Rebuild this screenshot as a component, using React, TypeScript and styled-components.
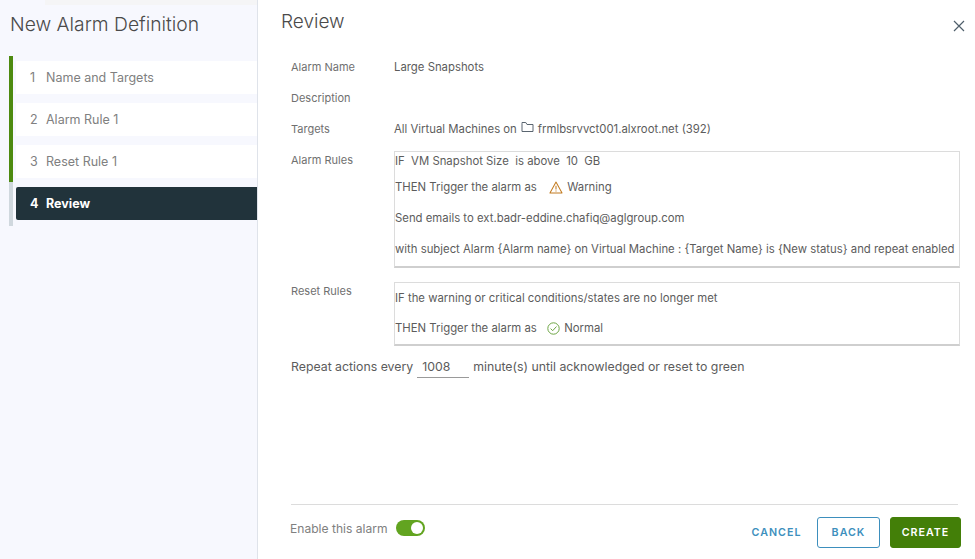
import React from 'react';
import styled, { createGlobalStyle } from 'styled-components';

const GlobalStyle = createGlobalStyle`
    html, body {
        margin: 0;
        padding: 0;
        background: #fff;
    }

    body {
        font-family: Inter, "Noto Sans", sans-serif;
        color: #565656;
    }
`;

const Page = styled.div`
    display: flex;
    width: 975px;
    height: 559px;
    overflow: hidden;
`;

const Sidebar = styled.aside`
    position: relative;
    flex: 0 0 258px;
    box-sizing: border-box;
    padding: 13px 0 0 9px;
    background: #f7f8fe;
    border-right: 1px solid #dfe3ea;

    &::before {
        content: '';
        position: absolute;
        top: 0;
        left: 45px;
        right: 0;
        height: 5px;
        background: #f5f5f6;
    }
`;

const Title = styled.h2`
    margin: 0 0 21px 1px;
    font-size: 19.3px;
    line-height: 22px;
    font-weight: 300;
    color: #4a4a4a;
`;

const StepList = styled.ol`
    margin: 0;
    padding: 0;
    list-style: none;
`;

const Step = styled.li<{ $state: 'done' | 'current' }>`
    border-left: 4px solid ${({ $state }) => ($state === 'done' ? '#4d8a10' : '#d0d8de')};
    padding: ${({ $state }) => ($state === 'done' ? '5px 0 4px 3px' : '5px 0 6px 3px')};
`;

const StepBox = styled.div<{ $active?: boolean }>`
    display: flex;
    align-items: center;
    height: 33px;
    padding-left: 14px;
    font-size: 12.5px;
    font-weight: ${({ $active }) => ($active ? 700 : 400)};
    color: ${({ $active }) => ($active ? '#fff' : '#808080')};
    background: ${({ $active }) => ($active ? '#21333b' : '#fff')};
    border-radius: ${({ $active }) => ($active ? '2px 0 0 2px' : '0')};
`;

const StepNumber = styled.span`
    width: 16px;
`;

const Main = styled.main`
    flex: 1;
    display: flex;
    flex-direction: column;
    box-sizing: border-box;
    padding: 11px 14px 11px 23px;
    min-width: 0;
`;

const Header = styled.header`
    display: flex;
    justify-content: space-between;
    align-items: flex-start;
    height: 48px;
`;

const Heading = styled.h3`
    margin: 0;
    font-size: 19px;
    line-height: 22px;
    font-weight: 300;
    color: #4a4a4a;
`;

const CloseButton = styled.button`
    display: flex;
    margin: 9px -4px 0 0;
    padding: 0;
    border: 0;
    background: none;
`;

const Details = styled.div`
    display: grid;
    grid-template-columns: 103px 1fr;
    margin: 0 1px 0 10px;
    font-size: 11.35px;
    line-height: 16px;
`;

const RowLabel = styled.div<{ $rowHeight?: number }>`
    color: #707070;
    font-size: 11px;
    height: ${({ $rowHeight }) => $rowHeight ?? 31}px;
`;

const RowValue = styled.div`
    color: #5c5c5c;
    display: flex;
    align-items: flex-start;
    gap: 4px;
`;

const RuleBox = styled.div<{ $height: number }>`
    box-sizing: border-box;
    height: ${({ $height }) => $height}px;
    margin: -1px 0 0 0;
    padding-top: 1px;
    border: 1px solid #dcdcdc;
    border-bottom-width: 2px;
    border-bottom-color: #cfcfcf;
    background: #fff;
    color: #5c5c5c;
    white-space: nowrap;
    overflow: hidden;
`;

const RuleLine = styled.div<{ $gap?: number }>`
    display: flex;
    align-items: center;
    height: 16px;
    margin-top: ${({ $gap }) => $gap ?? 0}px;
    white-space: pre;
`;

const RuleIcon = styled.svg<{ $before: number }>`
    flex: none;
    margin: 0 1px 0 ${({ $before }) => $before}px;
`;

const RepeatRow = styled.div`
    display: flex;
    align-items: flex-start;
    margin: 13px 0 0 10px;
    font-size: 12.3px;
    line-height: 16px;
    color: #5c5c5c;
`;

const RepeatInput = styled.div`
    box-sizing: border-box;
    width: 52px;
    height: 19px;
    margin: 0 4px 0 4px;
    padding-left: 5px;
    border-bottom: 1px solid #9a9a9a;
`;

const Spacer = styled.div`
    flex: 1;
`;

const Footer = styled.footer`
    display: flex;
    align-items: flex-start;
    margin: 0 3px 0 10px;
    padding-top: 12px;
    border-top: 1px solid #dcdcdc;
`;

const EnableGroup = styled.div`
    display: flex;
    align-items: center;
    height: 20px;
    margin-left: -1px;
    margin-top: 1px;
`;

const EnableLabel = styled.span`
    font-size: 12.1px;
    color: #808080;
    margin-right: 8px;
`;

const Toggle = styled.div`
    position: relative;
    width: 29px;
    height: 16px;
    border-radius: 8px;
    background: #62a420;

    &::after {
        content: '';
        position: absolute;
        top: 2px;
        right: 2px;
        width: 12px;
        height: 12px;
        border-radius: 50%;
        background: #fff;
    }
`;

const Actions = styled.div`
    display: flex;
    align-items: center;
    margin-left: auto;
    margin-right: -3px;
    gap: 10px;
`;

const Button = styled.button<{ $variant: 'link' | 'outline' | 'solid' }>`
    box-sizing: border-box;
    height: 31px;
    padding: 0;
    width: ${({ $variant }) => ($variant === 'link' ? '61px' : $variant === 'outline' ? '63px' : '71px')};
    font-family: inherit;
    font-size: 10.7px;
    font-weight: 600;
    letter-spacing: 1px;
    border-radius: 3px;
    color: ${({ $variant }) => ($variant === 'solid' ? '#fff' : '#3d8fbd')};
    background: ${({ $variant }) => ($variant === 'solid' ? '#437f08' : '#fff')};
    border: ${({ $variant }) =>
        $variant === 'link'
            ? '0'
            : $variant === 'outline'
              ? '1px solid #3d8fbd'
              : '1px solid #437f08'};
`;

const FolderIcon = () => (
    <svg width="13" height="12" viewBox="0 0 13 12" fill="none" stroke="#5a6570" strokeWidth="1">
        <path d="M1 2.5V10.5H12V3.5H6L4.8 1.5H1V2.5Z" />
    </svg>
);

const WarningIcon = () => (
    <RuleIcon $before={9} width="14" height="13" viewBox="0 0 15 14" fill="none">
        <path d="M7.5 1.2L14 12.8H1L7.5 1.2Z" stroke="#c27b20" strokeWidth="1.1" strokeLinejoin="round" />
        <path d="M7.5 5V9.2M7.5 10.2V11.3" stroke="#c27b20" strokeWidth="1.1" />
    </RuleIcon>
);

const NormalIcon = () => (
    <RuleIcon $before={7} width="13" height="13" viewBox="0 0 13 13" fill="none">
        <circle cx="6.5" cy="6.5" r="5.7" stroke="#6da544" strokeWidth="1" />
        <path d="M3.6 6.6L5.7 8.7L9.5 4.5" stroke="#6da544" strokeWidth="1" />
    </RuleIcon>
);

const steps = ['Name and Targets', 'Alarm Rule 1', 'Reset Rule 1'];

const App: React.FC = () => (
    <Page>
        <GlobalStyle />
        <Sidebar>
            <Title>New Alarm Definition</Title>
            <StepList>
                {steps.map((name, i) => (
                    <Step key={name} $state="done">
                        <StepBox>
                            <StepNumber>{i + 1}</StepNumber>
                            {name}
                        </StepBox>
                    </Step>
                ))}
                <Step $state="current">
                    <StepBox $active>
                        <StepNumber>4</StepNumber>
                        Review
                    </StepBox>
                </Step>
            </StepList>
        </Sidebar>
        <Main>
            <Header>
                <Heading>Review</Heading>
                <CloseButton aria-label="Close">
                    <svg width="12" height="12" viewBox="0 0 12 12" stroke="#4f5f6b" strokeWidth="1.2">
                        <path d="M1 1L11 11M11 1L1 11" />
                    </svg>
                </CloseButton>
            </Header>
            <Details>
                <RowLabel>Alarm Name</RowLabel>
                <RowValue>Large Snapshots</RowValue>
                <RowLabel>Description</RowLabel>
                <RowValue />
                <RowLabel>Targets</RowLabel>
                <RowValue>
                    All Virtual Machines on <FolderIcon /> frmlbsrvvct001.alxroot.net (392)
                </RowValue>
                <RowLabel $rowHeight={131}>Alarm Rules</RowLabel>
                <RuleBox $height={117}>
                    <RuleLine>IF  VM Snapshot Size  is above  10  GB</RuleLine>
                    <RuleLine $gap={10}>
                        THEN Trigger the alarm as <WarningIcon /> Warning
                    </RuleLine>
                    <RuleLine $gap={15}>Send emails to ext.badr-eddine.chafiq@aglgroup.com</RuleLine>
                    <RuleLine $gap={15}>
                        with subject Alarm {'{Alarm name}'} on Virtual Machine : {'{Target Name}'} is {'{New status}'} and repeat enabled
                    </RuleLine>
                </RuleBox>
                <RowLabel $rowHeight={63}>Reset Rules</RowLabel>
                <RuleBox $height={64}>
                    <RuleLine $gap={6}>IF the warning or critical conditions/states are no longer met</RuleLine>
                    <RuleLine $gap={14}>
                        THEN Trigger the alarm as <NormalIcon /> Normal
                    </RuleLine>
                </RuleBox>
            </Details>
            <RepeatRow>
                Repeat actions every
                <RepeatInput>1008</RepeatInput>
                minute(s) until acknowledged or reset to green
            </RepeatRow>
            <Spacer />
            <Footer>
                <EnableGroup>
                    <EnableLabel>Enable this alarm</EnableLabel>
                    <Toggle />
                </EnableGroup>
                <Actions>
                    <Button $variant="link">CANCEL</Button>
                    <Button $variant="outline">BACK</Button>
                    <Button $variant="solid">CREATE</Button>
                </Actions>
            </Footer>
        </Main>
    </Page>
);

export default App;
